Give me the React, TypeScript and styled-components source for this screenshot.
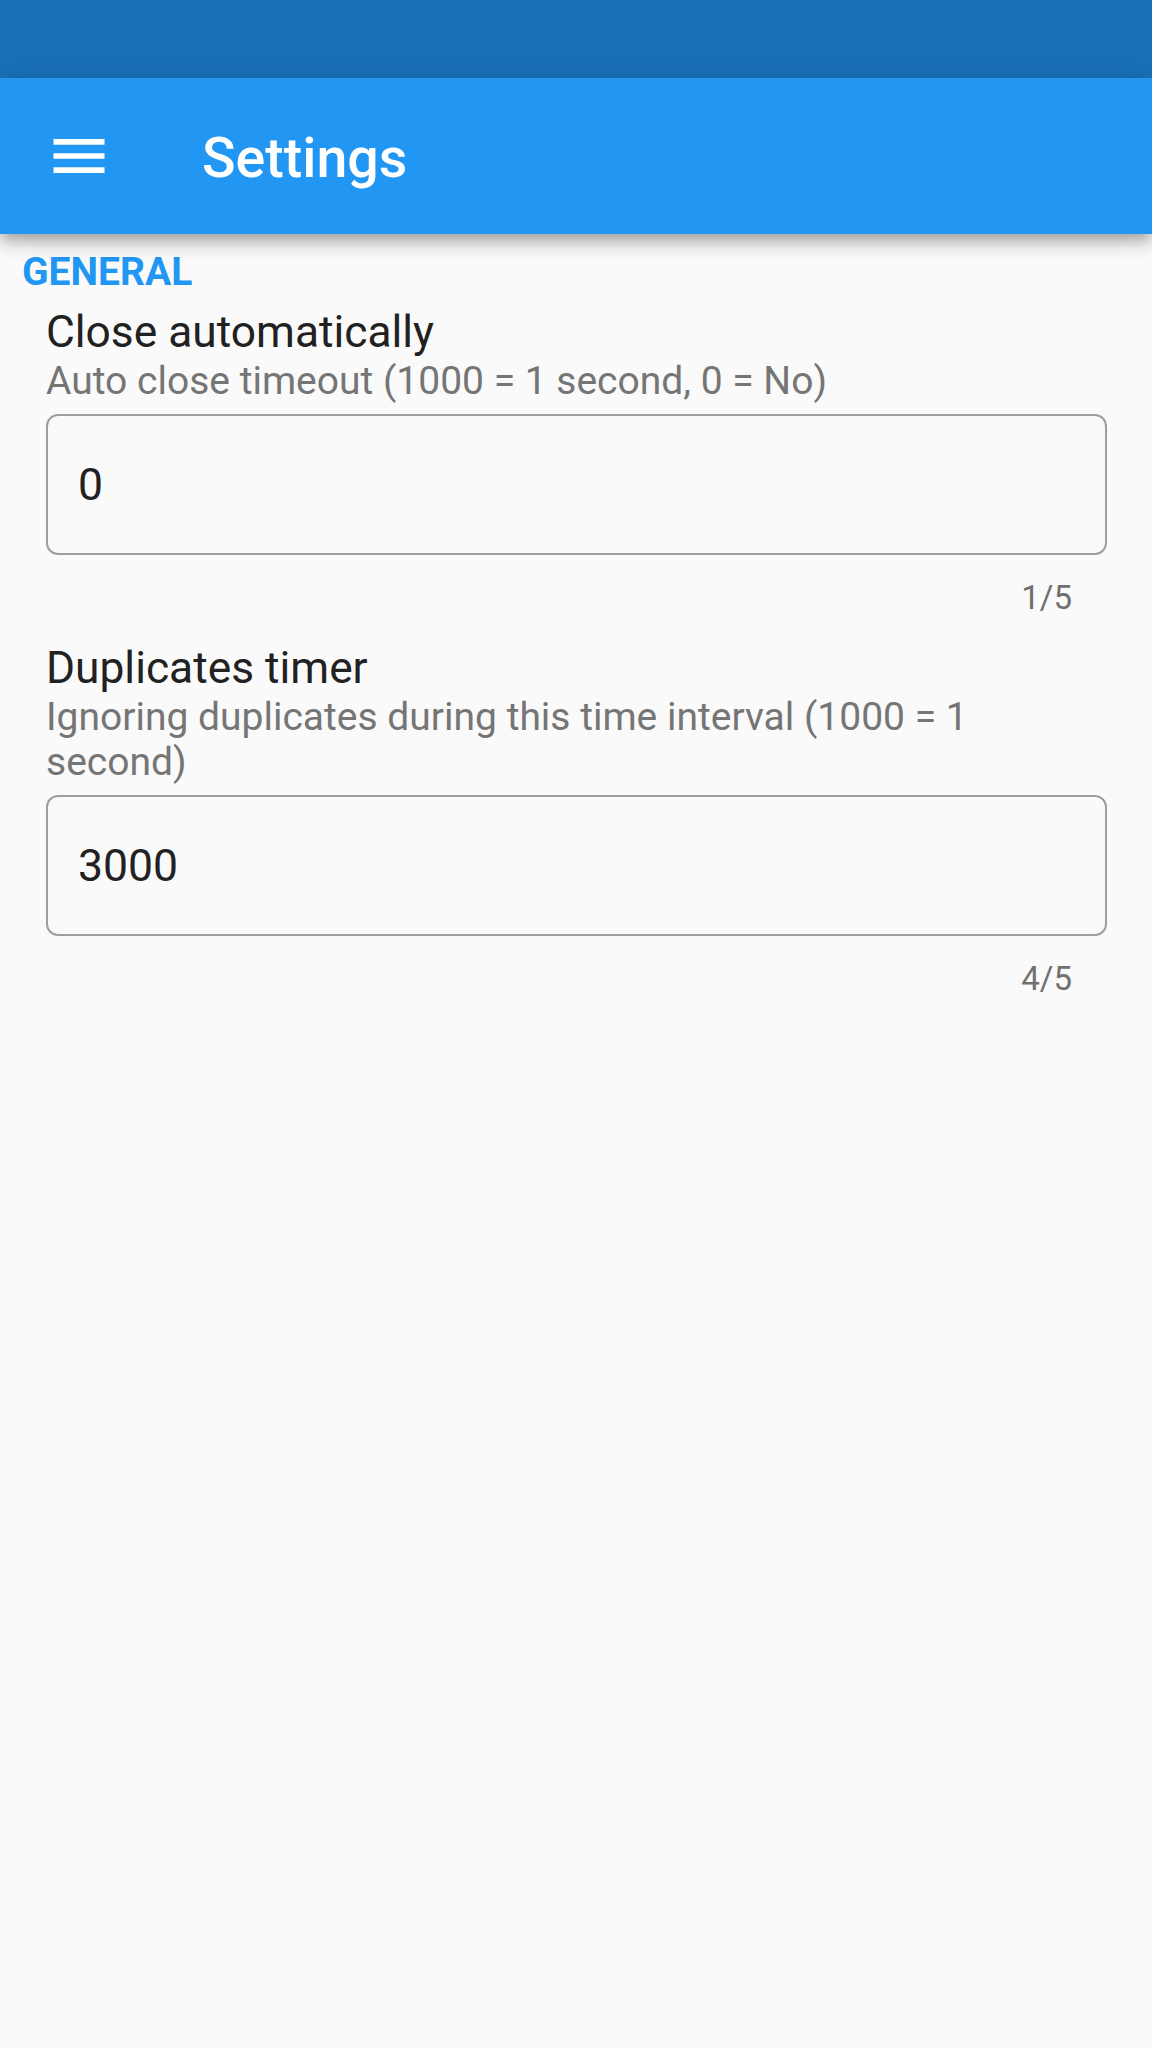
import React from "react";
import styled, { createGlobalStyle } from "styled-components";

const GlobalStyle = createGlobalStyle`
  html, body {
    margin: 0;
    padding: 0;
    background: #fafafa;
    font-family: Roboto, "Noto Sans", "Liberation Sans", sans-serif;
  }
  * { box-sizing: border-box; }
`;

const Screen = styled.div`
  min-height: 2048px;
  background: #fafafa;
  display: flex;
  flex-direction: column;
`;

const StatusBar = styled.div`
  height: 78px;
  background: #1970b6;
`;

const AppBar = styled.header`
  position: relative;
  z-index: 1;
  height: 156px;
  background: #2196f3;
  display: flex;
  align-items: center;
  box-shadow: 0 6px 11px -3px rgba(0, 0, 0, 0.2), 0 11px 14px 0 rgba(0, 0, 0, 0.14),
    0 3px 28px 0 rgba(0, 0, 0, 0.12);
`;

const MenuButton = styled.button`
  width: 158px;
  height: 156px;
  padding: 0;
  border: none;
  background: transparent;
  display: flex;
  align-items: center;
  justify-content: center;
  color: #fff;
`;

const Title = styled.h1`
  margin: 6px 0 0 44px;
  font-size: 55.5px;
  font-weight: 500;
  color: #fff;
  line-height: 1;
`;

const Content = styled.main`
  padding-top: 15px;
  display: flex;
  flex-direction: column;
`;

const SectionHeader = styled.div`
  padding-left: 22px;
  font-size: 39px;
  font-weight: 700;
  line-height: 46px;
  color: #2196f3;
`;

const Item = styled.section`
  padding: 0 45px 0 46px;
  margin-top: 11px;
  display: flex;
  flex-direction: column;
  & + & {
    margin-top: 24px;
  }
`;

const ItemTitle = styled.div`
  font-size: 44.3px;
  line-height: 52px;
  color: #212121;
`;

const ItemSubtitle = styled.div`
  margin-top: 1px;
  font-size: 39px;
  line-height: 45px;
  color: #757575;
`;

const Field = styled.input`
  margin-top: 10px;
  width: 100%;
  height: 141px;
  padding: 0 30px;
  border: 2px solid #9e9e9e;
  border-radius: 12px;
  background: transparent;
  font-family: Roboto, "Noto Sans", sans-serif;
  font-size: 44.5px;
  color: #212121;
  outline: none;
`;

const Counter = styled.div`
  margin-top: 23px;
  padding-right: 35px;
  text-align: right;
  font-size: 33px;
  line-height: 40px;
  color: #707070;
`;

const MenuIcon = () => (
  <svg width="68" height="68" viewBox="0 0 24 24" fill="currentColor" aria-hidden="true">
    <path d="M3 18h18v-2H3v2zm0-5h18v-2H3v2zm0-7v2h18V6H3z" />
  </svg>
);

type Setting = {
  title: string;
  subtitle: string;
  value: string;
  max: number;
};

const settings: Setting[] = [
  {
    title: "Close automatically",
    subtitle: "Auto close timeout (1000 = 1 second, 0 = No)",
    value: "0",
    max: 5,
  },
  {
    title: "Duplicates timer",
    subtitle: "Ignoring duplicates during this time interval (1000 = 1 second)",
    value: "3000",
    max: 5,
  },
];

export default function App() {
  return (
    <>
      <GlobalStyle />
      <Screen>
        <StatusBar />
        <AppBar>
          <MenuButton aria-label="menu">
            <MenuIcon />
          </MenuButton>
          <Title>Settings</Title>
        </AppBar>
        <Content>
          <SectionHeader>GENERAL</SectionHeader>
          {settings.map((s) => (
            <Item key={s.title}>
              <ItemTitle>{s.title}</ItemTitle>
              <ItemSubtitle>{s.subtitle}</ItemSubtitle>
              <Field defaultValue={s.value} readOnly />
              <Counter>
                {s.value.length}/{s.max}
              </Counter>
            </Item>
          ))}
        </Content>
      </Screen>
    </>
  );
}
